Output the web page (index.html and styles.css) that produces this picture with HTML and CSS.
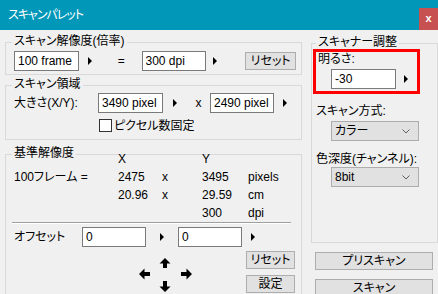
FILE: index.html
```html
<!DOCTYPE html>
<html lang="ja">
<head>
  <meta charset="UTF-8" />
  <title>スキャンパレット</title>
  <link rel="stylesheet" href="styles.css">
</head>
<body>
  <div class="titlebar">
    <span class="title">スキャンパレット</span>
    <span class="close">x</span>
  </div>

  <div class="panel">
    <div class="left">
      <fieldset class="group g-res">
        <legend>スキャン解像度(倍率)</legend>
        <div class="row">
          <input class="field" value="100 frame" readonly>
          <span class="spin s22"></span>
          <span class="eq">=</span>
          <input class="field w64" value="300 dpi" readonly>
          <span class="spin s20"></span>
          <button class="btn res-reset">リセット</button>
        </div>
      </fieldset>

      <fieldset class="group g-area">
        <legend>スキャン領域</legend>
        <div class="row">
          <span class="size-label">大きさ(X/Y):</span>
          <input class="field" value="3490 pixel" readonly>
          <span class="spin s24"></span>
          <span class="times">x</span>
          <input class="field w64" value="2490 pixel" readonly>
          <span class="spin s22"></span>
        </div>
        <label class="check-row"><span class="checkbox"></span>ピクセル数固定</label>
      </fieldset>

      <fieldset class="group g-base">
        <legend>基準解像度</legend>
        <div class="res-table">
          <span></span><span>X</span><span></span><span>Y</span><span></span>
          <span>100フレーム =</span><span>2475</span><span>x</span><span>3495</span><span>pixels</span>
          <span></span><span>20.96</span><span>x</span><span>29.59</span><span>cm</span>
          <span></span><span></span><span></span><span>300</span><span>dpi</span>
        </div>
        <div class="separator"></div>
        <div class="row offset-row">
          <span class="offset-label">オフセット</span>
          <input class="field w64" value="0" readonly>
          <span class="spin s32"></span>
          <input class="field w64" value="0" readonly>
          <span class="spin s22"></span>
        </div>
        <div class="move-area">
          <svg class="arrows" width="61" height="36" viewBox="0 0 61 36">
            <polygon points="30,1 35.5,6.5 32,6.5 32,11 28,11 28,6.5 24.5,6.5" fill="#000"/>
            <polygon points="30,35 35.5,29.5 32,29.5 32,24 28,24 28,29.5 24.5,29.5" fill="#000"/>
            <polygon points="4,17 9.5,11.5 9.5,15 15,15 15,19 9.5,19 9.5,22.5" fill="#000"/>
            <polygon points="57,17 51.5,11.5 51.5,15 46,15 46,19 51.5,19 51.5,22.5" fill="#000"/>
          </svg>
          <div class="move-buttons">
            <button class="btn small">リセット</button>
            <button class="btn small">設定</button>
          </div>
        </div>
      </fieldset>
    </div>

    <div class="right">
      <fieldset class="group g-adjust">
        <legend>スキャナー調整</legend>
        <div class="highlight">
          <div class="hl-label">明るさ:</div>
          <div class="row hl-row">
            <input class="field" value="-30" readonly>
            <span class="spin s20"></span>
          </div>
        </div>
        <div class="r-label first">スキャン方式:</div>
        <div class="select first">
          <span>カラー</span>
          <svg width="8" height="5" viewBox="0 0 8 5"><polyline points="0.5,0.5 4,4 7.5,0.5" fill="none" stroke="#606060" stroke-width="1"/></svg>
        </div>
        <div class="r-label second">色深度(チャンネル):</div>
        <div class="select second">
          <span>8bit</span>
          <svg width="8" height="5" viewBox="0 0 8 5"><polyline points="0.5,0.5 4,4 7.5,0.5" fill="none" stroke="#606060" stroke-width="1"/></svg>
        </div>
      </fieldset>
      <button class="btn big">プリスキャン</button>
      <button class="btn big">スキャン</button>
    </div>
  </div>
</body>
</html>
```

FILE: styles.css
```css
* {
  box-sizing: border-box;
}
html, body {
  margin: 0;
}
body {
  width: 438px;
  height: 294px;
  overflow: hidden;
  background: #f0f0f0;
  color: #000;
  font-family: "Liberation Sans", "Noto Sans CJK JP", sans-serif;
  font-size: 12px;
  line-height: 14px;
  font-feature-settings: "palt";
}

.titlebar {
  height: 30px;
  background: #0097b9;
  display: flex;
  justify-content: space-between;
}
.title {
  color: #fff;
  padding-left: 8px;
  line-height: 30px;
  letter-spacing: -1px;
}
.close {
  width: 19px;
  height: 22px;
  margin-top: 8px;
  background: #c75050;
  color: #fff;
  font-weight: bold;
  font-size: 11px;
  line-height: 20px;
  text-align: center;
}

.panel {
  display: flex;
  gap: 9px;
  padding: 0 0 0 5px;
}
.left {
  width: 297px;
}
.right {
  width: 127px;
}

fieldset.group {
  margin: 0;
  min-width: 0;
  border: 1px solid #d9d9d9;
  padding: 0 5px 3px 8px;
}
legend {
  padding: 0 2px 2px;
  margin-left: -2px;
  line-height: 14px;
}

.row {
  display: flex;
  align-items: center;
  height: 20px;
}
.field {
  width: 65px;
  height: 20px;
  margin: 0;
  padding: 0 0 0 3px;
  border: 1px solid #7a7a7a;
  background: #fff;
  font: inherit;
  color: #000;
  outline: none;
}
.field.w64 {
  width: 64px;
}
.spin {
  display: flex;
  justify-content: center;
  align-items: center;
  height: 20px;
}
.spin::before {
  content: "";
  border-left: 4px solid #000;
  border-top: 4px solid transparent;
  border-bottom: 4px solid transparent;
}
.s20 { width: 20px; }
.s22 { width: 22px; }
.s24 { width: 24px; }
.s32 { width: 32px; }

.eq {
  width: 41px;
  text-align: center;
}
.btn {
  height: 18px;
  margin: 0;
  padding: 0;
  border: 1px solid #adadad;
  background: #e1e1e1;
  font: inherit;
  color: #000;
  line-height: 16px;
}

/* スキャン解像度 */
.g-res {
  margin-top: 4px !important;
  padding-top: 1px !important;
}
.res-reset {
  width: 51px;
  margin-left: 20px;
}

/* スキャン領域 */
.g-area {
  margin-top: 2px !important;
  padding-bottom: 7px !important;
}
.size-label {
  width: 84px;
  white-space: nowrap;
}
.times {
  width: 23px;
  text-align: center;
}
.check-row {
  display: flex;
  align-items: center;
  height: 13px;
  margin-top: 6px;
  padding-left: 85px;
}
.checkbox {
  width: 13px;
  height: 13px;
  border: 1px solid #333;
  background: #fff;
  margin-right: 2px;
}

/* 基準解像度 */
.g-base {
  margin-top: 6px !important;
  padding-bottom: 30px !important;
}
.res-table {
  display: grid;
  grid-template-columns: 104px 44px 40px 46px auto;
  grid-template-rows: 19px 18px 18px 18px;
  align-items: center;
  margin-top: -13px;
  white-space: nowrap;
}
.separator {
  margin: 0 5px 0 -2px;
  border-top: 1px solid #a0a0a0;
  border-bottom: 1px solid #fff;
}
.offset-row {
  margin-top: 3px;
}
.offset-label {
  width: 68px;
}
.move-area {
  display: flex;
  margin-top: 4px;
}
.arrows {
  margin: 6px 0 0 121px;
}
.move-buttons {
  display: flex;
  flex-direction: column;
  gap: 6px;
  margin: 0 1px 0 auto;
}
.btn.small {
  width: 49px;
}

/* スキャナー調整 */
.g-adjust {
  margin-top: 5px !important;
  padding: 0 2px 55px 1px !important;
}
.g-adjust legend {
  margin-left: 3px;
}
.highlight {
  width: 107px;
  margin-top: -2px;
  border: 3px solid #f00;
  padding: 0 0 2px 2px;
}
.hl-row {
  margin-top: 3px;
  padding-left: 13px;
}
.r-label {
  margin-left: 3px;
  white-space: nowrap;
}
.r-label.first {
  margin-top: 10px;
}
.r-label.second {
  margin-top: 11px;
}
.select {
  display: flex;
  justify-content: space-between;
  align-items: center;
  width: 88px;
  height: 20px;
  margin-left: 18px;
  padding: 0 8px 0 3px;
  border: 1px solid #adadad;
  background: #e1e1e1;
}
.select.first {
  margin-top: 3px;
}
.select.second {
  margin-top: 1px;
}
.btn.big {
  display: block;
  width: 118px;
  margin: 9px 0 0 4px;
}
```
